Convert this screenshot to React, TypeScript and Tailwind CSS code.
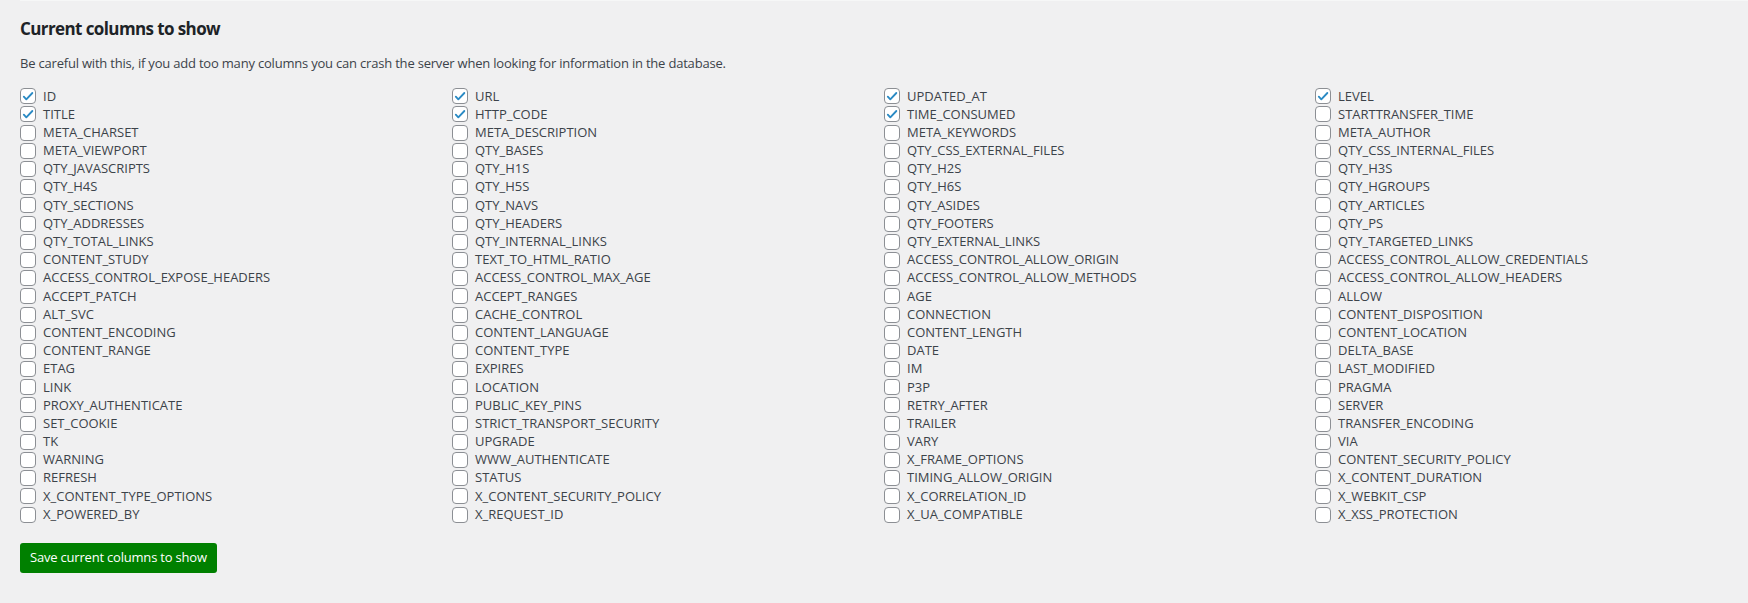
import React from 'react'

// Rows of four, read left to right as in the settings grid
const ROWS: string[][] = [
  ['ID', 'URL', 'UPDATED_AT', 'LEVEL'],
  ['TITLE', 'HTTP_CODE', 'TIME_CONSUMED', 'STARTTRANSFER_TIME'],
  ['META_CHARSET', 'META_DESCRIPTION', 'META_KEYWORDS', 'META_AUTHOR'],
  ['META_VIEWPORT', 'QTY_BASES', 'QTY_CSS_EXTERNAL_FILES', 'QTY_CSS_INTERNAL_FILES'],
  ['QTY_JAVASCRIPTS', 'QTY_H1S', 'QTY_H2S', 'QTY_H3S'],
  ['QTY_H4S', 'QTY_H5S', 'QTY_H6S', 'QTY_HGROUPS'],
  ['QTY_SECTIONS', 'QTY_NAVS', 'QTY_ASIDES', 'QTY_ARTICLES'],
  ['QTY_ADDRESSES', 'QTY_HEADERS', 'QTY_FOOTERS', 'QTY_PS'],
  ['QTY_TOTAL_LINKS', 'QTY_INTERNAL_LINKS', 'QTY_EXTERNAL_LINKS', 'QTY_TARGETED_LINKS'],
  ['CONTENT_STUDY', 'TEXT_TO_HTML_RATIO', 'ACCESS_CONTROL_ALLOW_ORIGIN', 'ACCESS_CONTROL_ALLOW_CREDENTIALS'],
  ['ACCESS_CONTROL_EXPOSE_HEADERS', 'ACCESS_CONTROL_MAX_AGE', 'ACCESS_CONTROL_ALLOW_METHODS', 'ACCESS_CONTROL_ALLOW_HEADERS'],
  ['ACCEPT_PATCH', 'ACCEPT_RANGES', 'AGE', 'ALLOW'],
  ['ALT_SVC', 'CACHE_CONTROL', 'CONNECTION', 'CONTENT_DISPOSITION'],
  ['CONTENT_ENCODING', 'CONTENT_LANGUAGE', 'CONTENT_LENGTH', 'CONTENT_LOCATION'],
  ['CONTENT_RANGE', 'CONTENT_TYPE', 'DATE', 'DELTA_BASE'],
  ['ETAG', 'EXPIRES', 'IM', 'LAST_MODIFIED'],
  ['LINK', 'LOCATION', 'P3P', 'PRAGMA'],
  ['PROXY_AUTHENTICATE', 'PUBLIC_KEY_PINS', 'RETRY_AFTER', 'SERVER'],
  ['SET_COOKIE', 'STRICT_TRANSPORT_SECURITY', 'TRAILER', 'TRANSFER_ENCODING'],
  ['TK', 'UPGRADE', 'VARY', 'VIA'],
  ['WARNING', 'WWW_AUTHENTICATE', 'X_FRAME_OPTIONS', 'CONTENT_SECURITY_POLICY'],
  ['REFRESH', 'STATUS', 'TIMING_ALLOW_ORIGIN', 'X_CONTENT_DURATION'],
  ['X_CONTENT_TYPE_OPTIONS', 'X_CONTENT_SECURITY_POLICY', 'X_CORRELATION_ID', 'X_WEBKIT_CSP'],
  ['X_POWERED_BY', 'X_REQUEST_ID', 'X_UA_COMPATIBLE', 'X_XSS_PROTECTION'],
]

const CHECKED = ['ID', 'URL', 'UPDATED_AT', 'LEVEL', 'TITLE', 'HTTP_CODE', 'TIME_CONSUMED']

function Checkbox({ checked }: { checked: boolean }) {
  return (
    <span className="flex h-4 w-4 shrink-0 items-center justify-center rounded-[4px] border border-[#8c8f94] bg-white">
      {checked && (
        <svg viewBox="0 0 20 20" className="h-[15px] w-[15px]">
          <path d="M4 10.2l3.6 3.9L16.2 5" fill="none" stroke="#2a8ac4" strokeWidth="2.6" strokeLinecap="round" strokeLinejoin="round" />
        </svg>
      )}
    </span>
  )
}

export default function App() {
  return (
    <div className="min-h-[603px] bg-[#f0f0f1] font-['Open_Sans',sans-serif] text-[#3c434a]">
      <div className="ml-5 h-px bg-[#f6f7f7]" />
      <div className="pl-5">
        <h2 className="mt-4 text-[17px] font-bold leading-[23px] tracking-[-0.6px] text-[#1d2327]">Current columns to show</h2>
        <p className="mt-[14px] text-[13px] leading-[18.2px] tracking-[-0.2px]">
          Be careful with this, if you add too many columns you can crash the server when looking for information in the database.
        </p>

        <div className="mt-[15px] grid grid-cols-[432px_432px_431px_1fr]">
          {ROWS.flat().map((name) => (
            <label key={name} className="flex h-[18.2px] items-center gap-[7px] text-[13px]">
              <Checkbox checked={CHECKED.includes(name)} />
              <span className="whitespace-nowrap">{name}</span>
            </label>
          ))}
        </div>

        <button className="mt-[19px] h-[30px] rounded-[3px] bg-[#008000] px-[10px] text-[13px] tracking-[-0.2px] text-white">
          Save current columns to show
        </button>
      </div>
      <div className="ml-5 mt-[30px] h-px bg-[#dcdcde]" />
    </div>
  )
}
